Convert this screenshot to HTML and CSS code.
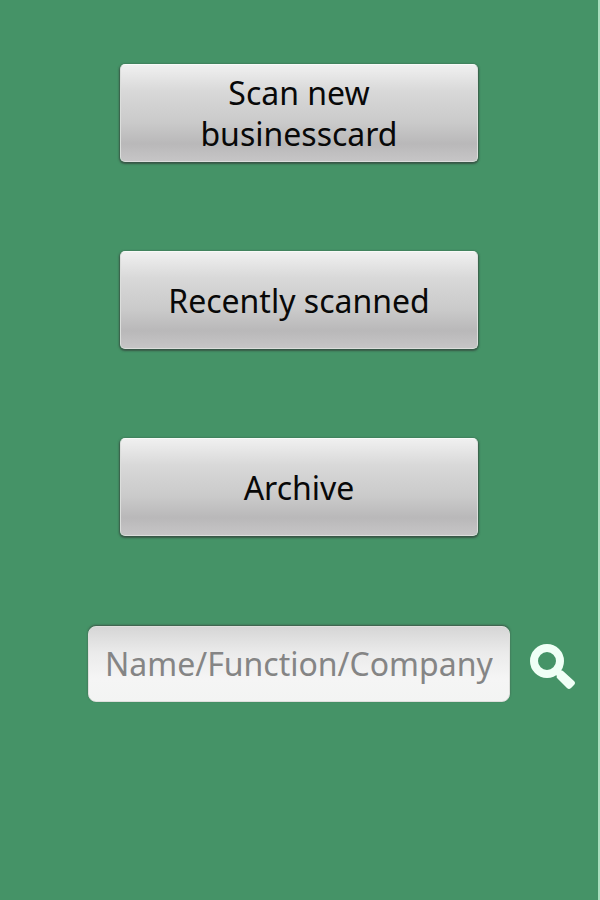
FILE: index.html
```html
<!DOCTYPE html>
<html lang="en">
<head>
    <meta charset="UTF-8">
    <meta name="viewport" content="width=device-width, initial-scale=1.0">
    <title>Businesscard scanner</title>
    <link rel="stylesheet" href="styles.css">
</head>

<body>
<main class="container">
    <nav class="menu">
        <button type="button" class="menu-button">Scan new businesscard</button>
        <button type="button" class="menu-button">Recently scanned</button>
        <button type="button" class="menu-button">Archive</button>
    </nav>

    <form class="search" role="search">
        <input type="text" class="search-input" aria-label="Name/Function/Company" placeholder="Name/Function/Company">
        <button type="button" class="search-button" aria-label="Search">
            <svg class="search-icon" viewBox="0 0 46 46" aria-hidden="true">
                <circle cx="17" cy="17" r="13" fill="none" stroke="currentColor" stroke-width="8"/>
                <path d="M26 26 L34 34" stroke="currentColor" stroke-width="7"/>
                <path d="M33 27 L44 37 Q46 39 44 41 L41 44 Q39 46 37 44 L27 34 Q26 33 27 32 L31 27 Q32 26 33 27 Z" fill="currentColor"/>
            </svg>
        </button>
    </form>
</main>
</body>
</html>
```

FILE: styles.css
```css
* {
    box-sizing: border-box;
    margin: 0;
    padding: 0;
}

body {
    font-family: 'Noto Sans', 'Open Sans', sans-serif;
    background-color: #459367;
    min-height: 100vh;
    border-right: 2px solid #a9dfbe;
}

.container {
    padding-top: 64px;
}

.menu {
    display: flex;
    flex-direction: column;
    align-items: center;
    gap: 89px;
}

.menu-button {
    width: 60%;
    min-height: 98px;
    padding: 7px 40px;
    border: 1px solid #dcdedc;
    border-top-color: #f8faf8;
    border-radius: 5px;
    background: linear-gradient(#f0f0f0, #d8d8d8 28%, #cacaca 60%, #b9b8b9 82%, #c6c5c6);
    box-shadow: 0 1px 2px 1px rgba(50, 60, 55, 0.7);
    color: #080808;
    font-family: inherit;
    font-size: 32px;
    line-height: 41px;
    cursor: pointer;
}

.menu-button:active {
    background: #b9b8b9;
}

/* search row */
.search {
    display: flex;
    align-items: center;
    gap: 20px;
    margin-top: 90px;
    padding: 0 22px 0 88px;
}

.search-input {
    flex: 1;
    min-width: 0;
    height: 76px;
    padding: 0 16px 2px;
    border: 1px solid #dedfdc;
    border-radius: 8px;
    background: linear-gradient(#d6d6d6, #ebebeb 35%, #f5f5f5 70%, #f3f4f3);
    box-shadow: 0 -1px 2px rgba(60, 60, 60, 0.7);
    color: #111;
    font-family: inherit;
    font-size: 32px;
    outline: none;
}

.search-input::placeholder {
    color: #858585;
    opacity: 1;
}

.search-button {
    padding-top: 6px;
    border: none;
    background: none;
    color: #f0fff6;
    cursor: pointer;
}

.search-icon {
    display: block;
    width: 46px;
    height: 46px;
}
```
